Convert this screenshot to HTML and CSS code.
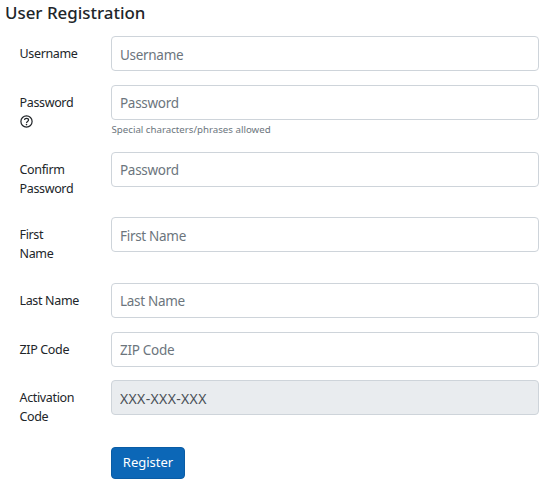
FILE: index.html
```html
<!DOCTYPE html>
<html>
<head>
	<meta charset="utf-8">
	<title>User Registration</title>
	<link rel="stylesheet" href="styles.css">
</head>
<body>
	<h2 class="title">User Registration</h2>
	<form class="reg-form">
		<div class="row">
			<label>Username</label>
			<div class="field"><input type="text" placeholder="Username"></div>
		</div>
		<div class="row">
			<label>Password<br>
				<svg class="help" viewBox="0 0 16 16" width="13" height="13" fill="none" stroke="#212529">
					<circle cx="8" cy="8" r="6.9" stroke-width="1.5"/>
					<path d="M5.5 6.2C5.6 4.8 6.6 4.1 8 4.1c1.4 0 2.5.8 2.5 2 0 1-.6 1.5-1.3 2-.7.5-1.1.8-1.1 1.7" stroke-width="1.5"/>
					<circle cx="8" cy="11.8" r="1" fill="#212529" stroke="none"/>
				</svg>
			</label>
			<div class="field">
				<input type="password" placeholder="Password">
				<small class="hint">Special characters/phrases allowed</small>
			</div>
		</div>
		<div class="row">
			<label>Confirm<br>Password</label>
			<div class="field"><input type="password" placeholder="Password"></div>
		</div>
		<div class="row">
			<label>First<br>Name</label>
			<div class="field"><input type="text" placeholder="First Name"></div>
		</div>
		<div class="row">
			<label>Last Name</label>
			<div class="field"><input type="text" placeholder="Last Name"></div>
		</div>
		<div class="row">
			<label>ZIP Code</label>
			<div class="field"><input type="text" placeholder="ZIP Code"></div>
		</div>
		<div class="row">
			<label>Activation<br>Code</label>
			<div class="field"><input class="locked" type="text" placeholder="XXX-XXX-XXX" disabled></div>
		</div>
		<div class="row">
			<span></span>
			<div class="field"><button type="button" class="btn">Register</button></div>
		</div>
	</form>
</body>
</html>
```

FILE: styles.css
```css
* {
	box-sizing: border-box;
}
html, body {
	margin: 0;
	padding: 0;
}
body {
	font-family: "Noto Sans", "Open Sans", sans-serif;
	font-size: 12.5px;
	letter-spacing: -0.35px;
	line-height: 19px;
	color: #212529;
	background: #fff;
	padding: 0 7px 0 5px;
}
.title {
	margin: 0;
	padding-top: 2px;
	height: 36px;
	font-size: 16.9px;
	letter-spacing: 0;
	line-height: 22px;
	font-weight: 500;
}
.row {
	display: grid;
	grid-template-columns: 106px 1fr;
	margin-bottom: 13.7px;
}
.row label {
	padding: 8px 0 5.8px 14.5px;
}
.help {
	display: block;
	margin-top: 3px;
}
input {
	display: block;
	width: 100%;
	height: 35px;
	padding: 2px 8px 0;
	font: inherit;
	font-size: 13.5px;
	letter-spacing: -0.3px;
	color: #495057;
	border: 1px solid #ced4da;
	border-radius: 4px;
	background: #fff;
}
input::placeholder {
	color: #6c757d;
	opacity: 1;
}
input.locked {
	font-size: 14px;
	letter-spacing: 0.35px;
	background: #e9ecef;
}
input.locked::placeholder {
	color: #495057;
}
.hint {
	display: block;
	margin-top: 2px;
	padding-left: 0.5px;
	font-size: 9.7px;
	letter-spacing: 0;
	line-height: 16.6px;
	color: #6c757d;
}
.btn {
	display: block;
	width: 74px;
	height: 32px;
	margin-top: 0.8px;
	font: inherit;
	font-size: 13px;
	color: #fff;
	background: #0c67b7;
	border: 1px solid #0a5ca5;
	border-radius: 4px;
}
```
